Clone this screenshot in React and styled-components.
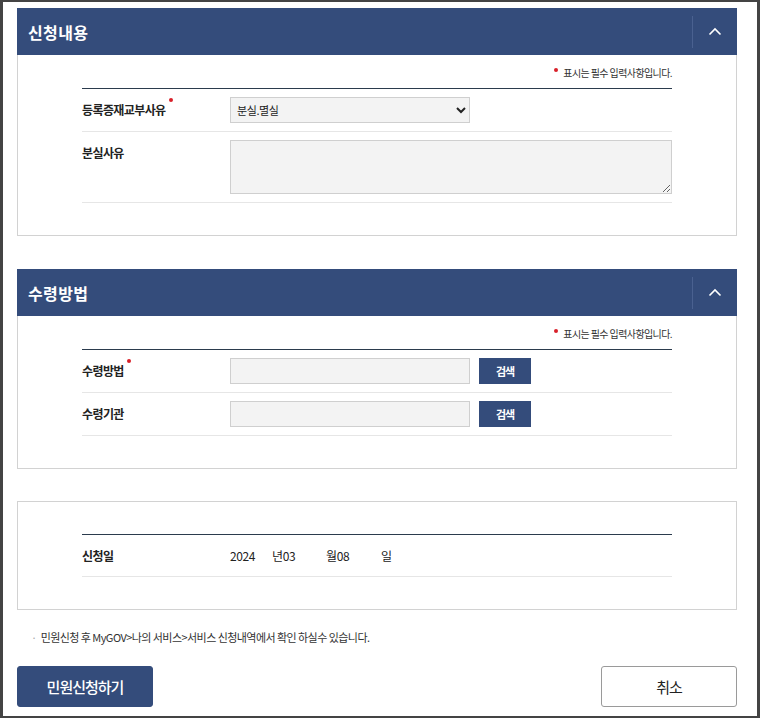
import React from "react";
import styled, { createGlobalStyle } from "styled-components";

const GlobalStyle = createGlobalStyle`
  * { box-sizing: border-box; }
  html, body { margin: 0; padding: 0; background: #fff; }
  body {
    font-family: "Noto Sans CJK KR", "Noto Sans", "Liberation Sans", sans-serif;
    color: #222;
  }
`;

const navy = "#344c7b";

const Frame = styled.div`
  width: 760px;
  height: 718px;
  border: 3px solid #444;
  border-top-width: 2px;
  border-bottom-width: 2px;
  padding: 6px 20px 0 14px;
  display: flex;
  flex-direction: column;
`;

const Panel = styled.section`
  display: flex;
  flex-direction: column;
  margin-bottom: ${(p) => p.$gap || 0}px;
`;

const PanelHeader = styled.div`
  height: 47px;
  background: ${navy};
  display: flex;
  align-items: center;
  justify-content: space-between;
`;

const PanelTitle = styled.h2`
  margin: 0 0 0 11px;
  color: #fff;
  font-size: 16px;
  font-weight: 700;
  letter-spacing: 0.4px;
`;

const ToggleButton = styled.button`
  width: 45px;
  height: 32px;
  border: 0;
  border-left: 1px solid #4a6190;
  background: transparent;
  display: flex;
  align-items: center;
  justify-content: center;
  padding: 0;
  cursor: pointer;
`;

const PanelBody = styled.div`
  border: 1px solid #d2d2d2;
  border-top: ${(p) => (p.$open ? "1px solid #d2d2d2" : "0")};
  padding: ${(p) => (p.$open ? "32px" : "0")} 64px 32px;
`;

const NoteRow = styled.div`
  height: 33px;
  display: flex;
  align-items: center;
  justify-content: flex-end;
  padding-top: 1px;
  font-size: 10px;
  letter-spacing: -0.6px;
  color: #333;
`;

const RedDot = styled.span`
  display: inline-block;
  width: 4px;
  height: 4px;
  border-radius: 50%;
  background: #d8202a;
  vertical-align: top;
  margin: ${(p) => p.$m || "0"};
`;

const FormTable = styled.div`
  border-top: 1px solid #2b3b4d;
`;

const Row = styled.div`
  display: flex;
  align-items: flex-start;
  padding: 8px 0;
  border-bottom: 1px solid #e6e6e6;
`;

const Label = styled.div`
  width: 148px;
  flex-shrink: 0;
  line-height: 25px;
  font-size: 12px;
  font-weight: 700;
  letter-spacing: -0.6px;
  color: #222;
`;

const Control = styled.div`
  flex: 1;
  display: flex;
  align-items: center;
  gap: ${(p) => (p.$gap === undefined ? 9 : p.$gap)}px;
  min-height: 25px;
`;

const Select = styled.select`
  width: 240px;
  height: 26px;
  border: 1px solid #cfcfcf;
  background: #f3f3f3;
  font-family: inherit;
  font-size: 11px;
  letter-spacing: -0.4px;
  color: #222;
  padding: 0 2px;
  border-radius: 0;
`;

const TextArea = styled.textarea`
  width: 100%;
  height: 54px;
  border: 1px solid #cfcfcf;
  background: #f3f3f3;
  resize: vertical;
  font-family: inherit;
  display: block;
`;

const TextInput = styled.input`
  width: 240px;
  height: 26px;
  border: 1px solid #cfcfcf;
  background: #f3f3f3;
  font-family: inherit;
`;

const SearchButton = styled.button`
  width: 52px;
  height: 26px;
  border: 0;
  background: ${navy};
  color: #fff;
  font-family: inherit;
  font-size: 11px;
  font-weight: 700;
  letter-spacing: -1px;
  padding: 0;
`;

const DateValue = styled.span`
  display: inline-block;
  width: ${(p) => p.$w}px;
  font-size: 12px;
  line-height: 25px;
  letter-spacing: -0.4px;
  color: #222;
`;

const Footnote = styled.p`
  margin: 20px 0 0 14px;
  font-size: 11px;
  letter-spacing: -0.55px;
  color: #333;
  line-height: 14px;
  &::before {
    content: "·";
    color: #aaa;
    margin-right: 4px;
  }
`;

const ButtonBar = styled.div`
  display: flex;
  justify-content: space-between;
  margin-top: 22px;
`;

const ActionButton = styled.button`
  width: 136px;
  height: 41px;
  border-radius: 3px;
  font-family: inherit;
  font-size: 15px;
  letter-spacing: -1px;
  cursor: pointer;
  background: ${(p) => (p.$primary ? navy : "#fff")};
  color: ${(p) => (p.$primary ? "#fff" : "#222")};
  border: 1px solid ${(p) => (p.$primary ? navy : "#9a9a9a")};
  font-weight: ${(p) => (p.$primary ? 500 : 400)};
`;

const ChevronUp = () => (
  <svg width="14" height="9" viewBox="0 0 14 9" fill="none">
    <path d="M1.5 7.5 L7 2 L12.5 7.5" stroke="#fff" strokeWidth="1.6" />
  </svg>
);

const RequiredNote = () => (
  <NoteRow>
    <RedDot $m="-4px 5px 0 0" />
    표시는 필수 입력사항입니다.
  </NoteRow>
);

const SectionPanel = ({ title, gap, children }) => (
  <Panel $gap={gap}>
    <PanelHeader>
      <PanelTitle>{title}</PanelTitle>
      <ToggleButton aria-label="접기">
        <ChevronUp />
      </ToggleButton>
    </PanelHeader>
    <PanelBody>
      <RequiredNote />
      <FormTable>{children}</FormTable>
    </PanelBody>
  </Panel>
);

const App = () => {
  return (
    <>
      <GlobalStyle />
      <Frame>
        <SectionPanel title="신청내용" gap={33}>
          <Row>
            <Label>
              등록증재교부사유
              <RedDot $m="1px 0 0 3px" />
            </Label>
            <Control>
              <Select defaultValue="lost">
                <option value="lost">분실.멸실</option>
              </Select>
            </Control>
          </Row>
          <Row>
            <Label>분실사유</Label>
            <Control>
              <TextArea />
            </Control>
          </Row>
        </SectionPanel>

        <SectionPanel title="수령방법" gap={32}>
          <Row>
            <Label>
              수령방법
              <RedDot $m="1px 0 0 3px" />
            </Label>
            <Control>
              <TextInput />
              <SearchButton>검색</SearchButton>
            </Control>
          </Row>
          <Row>
            <Label>수령기관</Label>
            <Control>
              <TextInput />
              <SearchButton>검색</SearchButton>
            </Control>
          </Row>
        </SectionPanel>

        <Panel>
          <PanelBody $open>
            <FormTable>
              <Row>
                <Label>신청일</Label>
                <Control $gap={0}>
                  <DateValue $w={42}>2024</DateValue>
                  <DateValue $w={54}>년03</DateValue>
                  <DateValue $w={55}>월08</DateValue>
                  <DateValue $w={20}>일</DateValue>
                </Control>
              </Row>
            </FormTable>
          </PanelBody>
        </Panel>

        <Footnote>민원신청 후 MyGOV&gt;나의 서비스&gt;서비스 신청내역에서 확인 하실수 있습니다.</Footnote>

        <ButtonBar>
          <ActionButton $primary>민원신청하기</ActionButton>
          <ActionButton>취소</ActionButton>
        </ButtonBar>
      </Frame>
    </>
  );
};

export default App;
